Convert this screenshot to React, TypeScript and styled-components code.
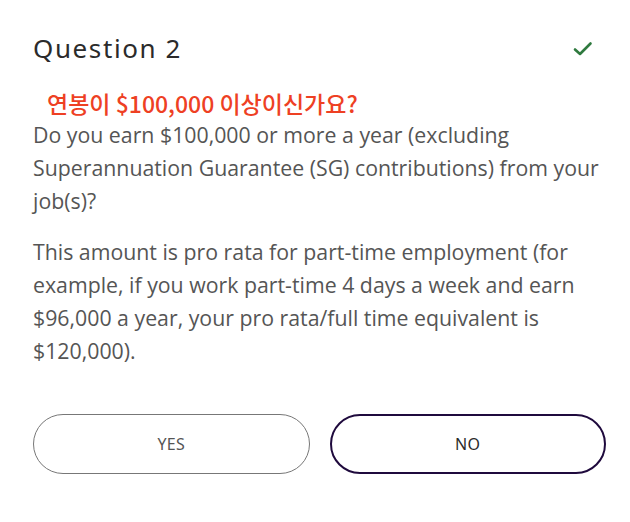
import styled, { createGlobalStyle } from 'styled-components';

const GlobalStyle = createGlobalStyle`
  html, body {
    margin: 0;
    padding: 0;
    background: #ffffff;
  }
`;

function App() {
  return (
    <>
      <GlobalStyle />
      <Card>
        <Header>
          <Title>Question 2</Title>
          <CheckIcon />
        </Header>
        <Translation>연봉이 $100,000 이상이신가요?</Translation>
        <Paragraph>
          Do you earn $100,000 or more a year (excluding Superannuation Guarantee (SG) contributions) from your job(s)?
        </Paragraph>
        <Paragraph spaced>
          This amount is pro rata for part-time employment (for example, if you work part-time 4 days a week and earn
          $96,000 a year, your pro rata/full time equivalent is $120,000).
        </Paragraph>
        <Buttons>
          <Choice>YES</Choice>
          <Choice selected>NO</Choice>
        </Buttons>
      </Card>
    </>
  );
}

function CheckIcon() {
  return (
    <Check width="20" height="16" viewBox="0 0 20 16" fill="none">
      <path d="M2 8.5 L7 13 L17.5 2.5" stroke="#2f7a3f" strokeWidth="2.6" strokeLinecap="round" strokeLinejoin="round" />
    </Check>
  );
}

const Card = styled.div`
  width: 573px;
  padding: 30px 24px 40px 33px;
  font-family: 'Open Sans', 'Noto Sans', sans-serif;
`;

const Header = styled.div`
  display: flex;
  align-items: center;
  justify-content: space-between;
  height: 36px;
`;

const Title = styled.h2`
  margin: 0;
  font-family: 'Noto Sans', sans-serif;
  font-weight: 400;
  font-size: 26px;
  letter-spacing: 1.6px;
  color: #2b2b2b;
`;

const Check = styled.svg`
  margin-right: 13px;
  margin-top: 2px;
`;

const Translation = styled.div`
  margin: 23px 0 0 14px;
  font-family: 'Noto Sans CJK KR', 'Noto Sans', sans-serif;
  font-weight: 500;
  font-size: 23px;
  line-height: 28px;
  color: #ee4023;
`;

const Paragraph = styled.p<{ spaced?: boolean }>`
  margin: ${(p) => (p.spaced ? '18px' : '1px')} 0 0;
  font-size: 21.3px;
  line-height: 33px;
  color: #555555;
`;

const Buttons = styled.div`
  display: grid;
  grid-template-columns: 1fr 1fr;
  gap: 20px;
  margin-top: 47px;
`;

const Choice = styled.button<{ selected?: boolean }>`
  height: 60px;
  border-radius: 30px;
  background: #ffffff;
  border: ${(p) => (p.selected ? '2px solid #1f0a3d' : '1px solid #777777')};
  font-family: 'Noto Sans', sans-serif;
  font-size: 16px;
  letter-spacing: 0.3px;
  color: ${(p) => (p.selected ? '#2b2b2b' : '#555555')};
`;

export default App;
